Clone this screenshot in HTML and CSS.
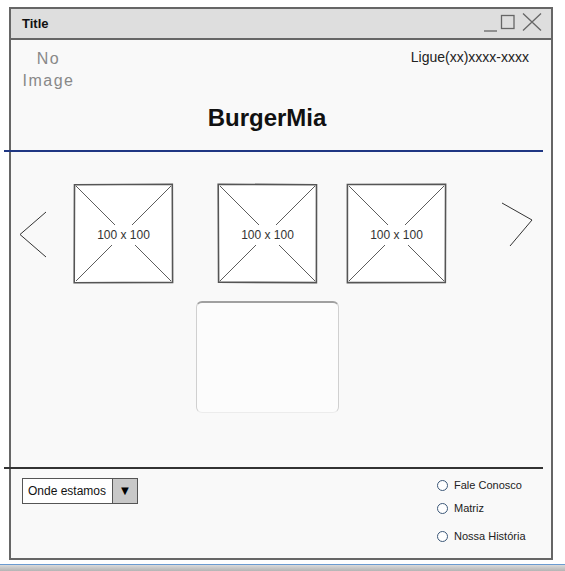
FILE: index.html
```html
<!DOCTYPE html>
<html lang="pt">
<head>
  <meta charset="UTF-8">
  <title>BurgerMia</title>
  <link rel="stylesheet" href="styles.css">
</head>
<body>

  <div class="window">
    <div class="titlebar">
      <span class="title">Title</span>
      <svg class="winctl" width="64" height="29" viewBox="0 0 64 29">
        <path d="M2 22 H15" stroke="#666" stroke-width="1.3" fill="none"/>
        <rect x="19.5" y="6.5" width="12.5" height="13" stroke="#666" stroke-width="1.3" fill="none"/>
        <path d="M41 4.5 L59 21.5 M59 4.5 L41 21.5" stroke="#666" stroke-width="1.3" fill="none"/>
      </svg>
    </div>

    <div class="content">
      <div class="header">
        <div class="noimage">No<br>Image</div>
        <div class="phone">Ligue(xx)xxxx-xxxx</div>
      </div>

      <h1 class="brand">BurgerMia</h1>
      <div class="rule rule-blue"></div>

      <div class="carousel">
        <svg class="arrow arrow-left" width="30" height="101" viewBox="0 0 30 101">
          <path d="M28 29 L2 51.5 L28 74" stroke="#333" stroke-width="1" fill="none"/>
        </svg>
        <div class="thumb">
          <svg class="thumb-lines" width="101" height="101" viewBox="0 0 101 101">
            <path d="M1.5 1.8 L99.3 1.2 L99.6 99.4 L1.2 99.7 Z" stroke="#555" stroke-width="1.6" fill="#fff"/>
            <path d="M3 3 L98 98 M98 3 L3 98" stroke="#333" stroke-width="0.8"/>
          </svg>
          <span>100 x 100</span>
        </div>
        <div class="thumb thumb-2">
          <svg class="thumb-lines" width="101" height="101" viewBox="0 0 101 101">
            <path d="M1.2 1.2 L99.5 1.8 L99.4 99.6 L1.6 99.2 Z" stroke="#555" stroke-width="1.6" fill="#fff"/>
            <path d="M3 3 L98 98 M98 3 L3 98" stroke="#333" stroke-width="0.8"/>
          </svg>
          <span>100 x 100</span>
        </div>
        <div class="thumb thumb-3">
          <svg class="thumb-lines" width="101" height="101" viewBox="0 0 101 101">
            <path d="M1.4 1.5 L99.6 1.4 L99.3 99.5 L1.4 99.6 Z" stroke="#555" stroke-width="1.6" fill="#fff"/>
            <path d="M3 3 L98 98 M98 3 L3 98" stroke="#333" stroke-width="0.8"/>
          </svg>
          <span>100 x 100</span>
        </div>
        <svg class="arrow arrow-right" width="34" height="101" viewBox="0 0 34 101">
          <path d="M2 20 L32 37 L10 63" stroke="#333" stroke-width="1" fill="none"/>
        </svg>
      </div>

      <div class="panel"></div>

      <div class="rule rule-dark"></div>

      <div class="footer">
        <div class="dropdown">
          <span class="dropdown-label">Onde estamos</span>
          <span class="dropdown-btn">&#9660;</span>
        </div>
        <ul class="options">
          <li class="opt"><span class="radio"></span>Fale Conosco</li>
          <li class="opt"><span class="radio"></span>Matriz</li>
          <li class="opt opt-last"><span class="radio"></span>Nossa História</li>
        </ul>
      </div>
    </div>
  </div>

  <div class="taskbar"></div>

</body>
</html>
```

FILE: styles.css
```css
html, body {
  margin: 0;
  padding: 0;
  background: #fff;
  font-family: 'Liberation Sans', Arial, sans-serif;
  color: #222;
  overflow: hidden;
}

.window {
  box-sizing: border-box;
  width: 544px;
  height: 553px;
  margin: 7px 0 0 9px;
  border: 2px solid #666;
  background: #f9f9f9;
}

.titlebar {
  display: flex;
  align-items: center;
  height: 29px;
  background: #dedede;
  border-bottom: 2px solid #666;
}

.title {
  padding-left: 11px;
  font-size: 13px;
  font-weight: bold;
  color: #111;
}

.winctl {
  margin-left: auto;
  margin-right: 5px;
}

.header {
  display: flex;
  justify-content: space-between;
  padding-top: 8px;
}

.noimage {
  width: 57px;
  margin-left: 9px;
  text-align: center;
  font-size: 16px;
  line-height: 22px;
  letter-spacing: 1.5px;
  color: #888;
}

.phone {
  margin-right: 22px;
  font-size: 14px;
  line-height: 16px;
  margin-top: 1px;
  color: #222;
}

.brand {
  margin: 12px 0 0 0;
  padding-right: 28px;
  text-align: center;
  font-size: 24px;
  line-height: 28px;
  font-weight: bold;
  color: #111;
}

.rule {
  margin-left: -7px;
  width: 539px;
  height: 2px;
}

.rule-blue {
  margin-top: 18px;
  background: #1f3783;
}

.rule-dark {
  margin-top: 54px;
  background: #333;
}

.carousel {
  display: flex;
  align-items: flex-start;
  margin-top: 31px;
  height: 101px;
}

.arrow-left {
  margin-left: 7px;
}

.thumb {
  position: relative;
  width: 101px;
  height: 101px;
  margin-left: 25px;
  display: flex;
  align-items: center;
  justify-content: center;
}

.thumb-2 {
  margin-left: 43px;
}

.thumb-3 {
  margin-left: 28px;
}

.thumb-lines {
  position: absolute;
  top: 0;
  left: 0;
}

.thumb span {
  position: relative;
  top: 1px;
  background: #fff;
  padding: 3px 1px;
  font-size: 12px;
  color: #333;
}

.arrow-right {
  margin-left: 53px;
}

.panel {
  box-sizing: border-box;
  width: 143px;
  height: 112px;
  margin: 17px 0 0 185px;
  background: #fcfcfc;
  border: 1px solid #d0d0d0;
  border-top: 2px solid #a0a0a0;
  border-bottom-color: #ececec;
  border-radius: 6px;
}

.footer {
  display: flex;
  align-items: flex-start;
  padding-left: 11px;
  margin-top: 9px;
}

.dropdown {
  box-sizing: border-box;
  display: flex;
  width: 116px;
  height: 26px;
  border: 1px solid #555;
  background: #fff;
}

.dropdown-label {
  flex: 1;
  padding-left: 5px;
  font-size: 12px;
  line-height: 24px;
  color: #111;
}

.dropdown-btn {
  width: 24px;
  background: #c8c8c8;
  border-left: 1px solid #555;
  text-align: center;
  font-size: 13px;
  line-height: 24px;
  color: #000;
}

.options {
  list-style: none;
  margin: 0 0 0 299px;
  padding: 0;
}

.opt {
  display: flex;
  align-items: center;
  height: 14px;
  margin-bottom: 9px;
  font-size: 11px;
  color: #222;
}

.opt:nth-child(2) {
  margin-bottom: 14px;
}

.radio {
  box-sizing: border-box;
  width: 11px;
  height: 11px;
  margin-right: 6px;
  border: 1px solid #3c5878;
  border-radius: 50%;
  background: #fff;
}

.taskbar {
  margin-top: 4px;
  height: 6px;
  border-top: 1px solid #6b9bd1;
  background: linear-gradient(#dadada, #b4b4b4);
}
```
